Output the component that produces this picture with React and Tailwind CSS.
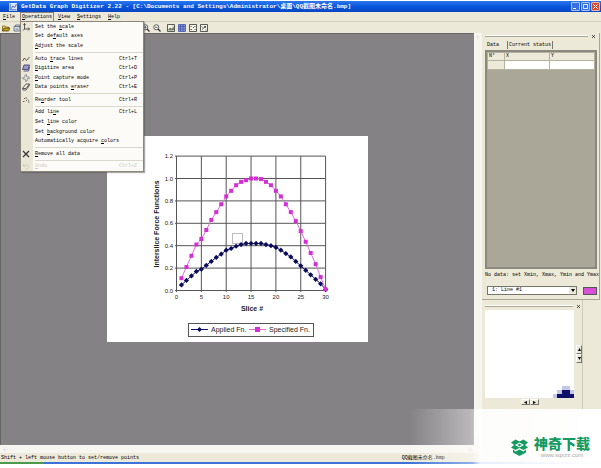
import React from 'react';
import { ArrowDown, ArrowLeft, ArrowRight, ArrowUp } from 'lucide-react';

const MENU = [
  [
    { pre: 'Set the ', key: 's', post: 'cale', icon: 'axes' },
    { pre: 'Set de', key: 'f', post: 'ault axes' },
    { pre: '', key: 'A', post: 'djust the scale' },
  ],
  [
    { pre: 'Auto ', key: 't', post: 'race lines', shortcut: 'Ctrl+T', icon: 'trace' },
    { pre: '', key: 'D', post: 'igitize area', shortcut: 'Ctrl+D', icon: 'area' },
    { pre: '', key: 'P', post: 'oint capture mode', shortcut: 'Ctrl+P', icon: 'capture' },
    { pre: 'Data points ', key: 'e', post: 'raser', shortcut: 'Ctrl+E', icon: 'eraser' },
  ],
  [{ pre: 'Re', key: 'o', post: 'rder tool', shortcut: 'Ctrl+R', icon: 'reorder' }],
  [
    { pre: 'Add li', key: 'n', post: 'e', shortcut: 'Ctrl+L' },
    { pre: 'Set ', key: 'l', post: 'ine color' },
    { pre: 'Set ', key: 'b', post: 'ackground color' },
    { pre: 'Automatically acquire ', key: 'c', post: 'olors' },
  ],
  [{ pre: '', key: 'R', post: 'emove all data', icon: 'remove' }],
  [{ pre: '', key: 'U', post: 'ndo', shortcut: 'Ctrl+Z', icon: 'undo', disabled: true }],
];

const SPECIFIED = [
  0.11, 0.21, 0.31, 0.41, 0.46, 0.54, 0.63, 0.7, 0.77, 0.84, 0.89, 0.94, 0.97, 0.985, 1, 1, 0.995,
  0.97, 0.94, 0.89, 0.84, 0.77, 0.7, 0.62, 0.53, 0.435, 0.335, 0.235, 0.12, 0.01,
];
const APPLIED = [
  0.05, 0.09, 0.13, 0.17, 0.19, 0.225, 0.26, 0.295, 0.325, 0.36, 0.375, 0.395, 0.41, 0.42, 0.42,
  0.42, 0.42, 0.41, 0.4, 0.385, 0.36, 0.33, 0.3, 0.26, 0.22, 0.18, 0.14, 0.1, 0.06, 0.01,
];

const px = (n) => 69.5 + n * 4.97;
const py = (v) => 154.5 - v * 112;
const points = (values) => values.map((v, i) => `${px(i + 1)},${py(v)}`).join(' ');

const Icon = ({ name }) => (
  <svg viewBox="0 0 16 16" className="h-2 w-2" fill="none" stroke="#333" strokeWidth="1.6" aria-hidden="true">
    {name === 'axes' && <path d="M5 1v11h10M3 4l2-3 2 3M12 9l3 3-3 3M2 15l3-3" />}
    {name === 'trace' && <path d="M1 12l4-6 4 5 6-7" />}
    {name === 'area' && (
      <>
        <path d="M4 2h11l-3 9H1z" fill="#9c9ccc" stroke="#333366" />
        <path d="M3 14h10l2-8" stroke="#333366" />
      </>
    )}
    {name === 'capture' && (
      <>
        <path d="M8 0v5M8 11v5M0 8h5M11 8h5" stroke="#666680" />
        <path d="M4 4h8v8H4z" strokeDasharray="2 2" stroke="#666680" />
      </>
    )}
    {name === 'eraser' && <path d="M8 2h7l-1 4-6 8H2l-1-3zM2 11h6l6-8" fill="#f6f5ee" />}
    {name === 'reorder' && <path d="M2 11h3M7 4h3M8 9h2M12 12h3M4 6l2-2M12 7l1 2" />}
    {name === 'remove' && <path d="M2 2l12 12M14 2L2 14" strokeWidth="2.4" />}
    {name === 'undo' && <path d="M3 3v6h6M3 9c3-6 11-5 10 2-1 3-4 3-6 3" stroke="#cfcab8" />}
    {name === 'open' && (
      <>
        <path d="M1 14V4h5l2 2h5v2" fill="#f6df75" stroke="#7b6510" />
        <path d="M1 14l3-6h12l-3 6z" fill="#c49d24" stroke="#4b3d08" />
      </>
    )}
    {name === 'save' && <path d="M2 5h12v9H2zM5 5V2h9v7M5 10h6" fill="#dbe4f4" stroke="#555d6b" />}
    {(name === 'zoomIn' || name === 'zoomOut') && (
      <>
        <circle cx="6.5" cy="6.5" r="5" fill="#fff" />
        <path d="M10 10l5 5" strokeWidth="2.6" />
        <path d="M4 6.5h5" />
        {name === 'zoomIn' && <path d="M6.5 4v5" />}
      </>
    )}
    {name === 'picture' && (
      <>
        <path d="M1 1h14v14H1z" fill="#f4f2e7" />
        <path d="M3 12l3-4 3 2 4-3v5zM11 4h2" fill="#7c8a6c" stroke="#66705a" />
      </>
    )}
    {name === 'grid' && (
      <>
        <path d="M1 1h14v14H1z" fill="#8997d6" stroke="#4555aa" />
        <path d="M5 1v14M10 1v14M1 5h14M1 10h14" stroke="#4555aa" />
      </>
    )}
    {name === 'plot' && <path d="M1 1h14v14H1zM4 4v2M3 11h3M8 7h2M11 11h2M11 5h2" fill="#f4f2e7" />}
    {name === 'export' && <path d="M1 1h14v14H1zM4 11l7-6M8 5h3v3M3 5l2 2M11 12h2" fill="#f4f2e7" />}
  </svg>
);

const ToolButton = ({ name, label }) => (
  <button type="button" aria-label={label} className="flex h-[10px] w-[11px] items-center justify-center">
    <Icon name={name} />
  </button>
);

const TitleBar = () => (
  <header className="flex h-[11px] shrink-0 items-center gap-1 bg-gradient-to-b from-[#2a78ee] via-[#0a55dd] to-[#0847c4] pr-px pl-[9px] text-white">
    <svg viewBox="0 0 14 14" className="h-2 w-2" aria-hidden="true">
      <rect width="14" height="14" fill="#dbe8ff" />
      <path d="M2 1v11h11M4 10l3-5 3 3 3-6" fill="none" stroke="#3656a8" strokeWidth="1.5" />
    </svg>
    <h1 className="flex-1 truncate text-[6px] leading-[10px] font-bold">
      GetData Graph Digitizer 2.22 - [C:\Documents and Settings\Administrator\桌面\QQ截图未命名.bmp]
    </h1>
    <div className="flex gap-px">
      <button type="button" aria-label="Minimize" className="flex h-[9px] w-[9px] items-end rounded-[1px] border border-[#a9c4f7] bg-[#3a6fe0] p-px">
        <span className="h-px w-[3px] bg-white" />
      </button>
      <button type="button" aria-label="Restore" className="flex h-[9px] w-[9px] items-center justify-center rounded-[1px] border border-[#a9c4f7] bg-[#3a6fe0]">
        <span className="h-[5px] w-[5px] border border-[#dfe9fc]" />
      </button>
      <button type="button" aria-label="Close" className="flex h-[9px] w-[9px] items-center justify-center rounded-[1px] border border-[#f0b8a8] bg-[#d8492b]">
        <svg viewBox="0 0 6 6" className="h-[5px] w-[5px]" stroke="#fff" strokeWidth="1.2"><path d="M0 0l6 6M6 0L0 6" /></svg>
      </button>
    </div>
  </header>
);

const OperationsMenu = () => (
  <div role="menu" className="absolute top-[9px] left-0 z-10 flex h-[151px] w-[124px] flex-col border border-[#8a867a] bg-gradient-to-r from-[#ebe7d6] from-[12px] to-[#fcfbf7] to-[12px] shadow-[1px_1px_1px_#55555580]">
    {MENU.map((group, g) => (
      <React.Fragment key={g}>
        {g > 0 && <div className="flex h-[3px] items-center pl-[14px]"><div className="h-px w-full bg-[#dad7cd]" /></div>}
        {group.map((item) => (
          <button
            key={item.pre + item.key + item.post}
            type="button"
            role="menuitem"
            disabled={item.disabled}
            className="flex w-full flex-1 items-center pr-[6px] text-[5px] leading-[8px] text-black disabled:text-[#cbc8be]"
          >
            <span className="flex w-[14px] pl-px">{item.icon && <Icon name={item.icon} />}</span>
            <span className="flex-1 text-left whitespace-pre">{item.pre}<u>{item.key}</u>{item.post}</span>
            <span>{item.shortcut}</span>
          </button>
        ))}
      </React.Fragment>
    ))}
  </div>
);

const MenuBar = () => (
  <nav className="flex h-[10px] shrink-0 items-center border-b border-[#d5d1c0] text-[5px] leading-[8px]">
    <button type="button" className="w-[20px] pl-[3px] text-left"><u>F</u>ile</button>
    <div className="relative">
      <button type="button" aria-expanded="true" className="h-[9px] w-[34px] border border-b-0 border-[#8a867a]"><u>O</u>perations</button>
      <OperationsMenu />
    </div>
    <button type="button" className="pl-1"><u>V</u>iew</button>
    <button type="button" className="pl-[7px]"><u>S</u>ettings</button>
    <button type="button" className="pl-[7px]"><u>H</u>elp</button>
  </nav>
);

const Chart = () => (
  <svg viewBox="0 0 261 206" role="img" aria-label="Interslice Force Functions" className="w-[261px] bg-white" fontFamily="Liberation Sans, sans-serif">
    <g stroke="#555" strokeWidth="1">
      {[0, 5, 10, 15, 20, 25, 30].map((n) => <path key={n} d={`M${px(n)} ${py(1.2)}V156`} />)}
      {[0, 0.2, 0.4, 0.6, 0.8, 1, 1.2].map((v) => <path key={v} d={`M68 ${py(v)}H${px(30)}`} />)}
    </g>
    <g fontSize="6" fill="#222">
      {[0, 5, 10, 15, 20, 25, 30].map((n) => <text key={n} x={px(n)} y="163" textAnchor="middle">{n}</text>)}
      {[0, 0.2, 0.4, 0.6, 0.8, 1, 1.2].map((v) => <text key={v} x="66" y={py(v) + 2} textAnchor="end">{v.toFixed(1)}</text>)}
    </g>
    <rect x="125.5" y="97.5" width="10" height="10" fill="#fff" stroke="#bbb" />
    <polyline points={points(APPLIED)} fill="none" stroke="#13136b" />
    {APPLIED.map((v, i) => <path key={i} d={`M${px(i + 1)} ${py(v) - 2.6}l2.600 2.600l-2.600 2.600l-2.600-2.600z`} fill="#0b0b5c" />)}
    <polyline points={points(SPECIFIED)} fill="none" stroke="#e06ae0" />
    {SPECIFIED.map((v, i) => <rect key={i} x={px(i + 1) - 2} y={py(v) - 2} width="4" height="4" fill="#d42fd4" />)}
    <g fontSize="7" fontWeight="bold" fill="#222">
      <text transform="translate(52 88) rotate(-90)" textAnchor="middle">Interslice Force Functions</text>
      <text x="145" y="175" textAnchor="middle">Slice #</text>
    </g>
    <rect x="81.5" y="187.5" width="125" height="13" fill="#fff" stroke="#555" />
    <g fontSize="7" fill="#222">
      <path d="M84 193.500h17" stroke="#13136b" />
      <path d="M92.500 191l2.500 2.500l-2.500 2.500l-2.500-2.500z" fill="#0b0b5c" />
      <text x="104" y="196">Applied Fn.</text>
      <path d="M142 193.500h17" stroke="#e06ae0" />
      <rect x="148" y="191" width="5" height="5" fill="#d42fd4" />
      <text x="162" y="196">Specified Fn.</text>
    </g>
  </svg>
);

const PanelGrip = () => (
  <div className="flex h-[6px] items-center gap-1">
    <div className="h-[2px] flex-1 border-y border-t-white border-b-[#aaa694]" />
    <button type="button" aria-label="Close panel" className="flex h-[5px] w-[5px] items-center">
      <svg viewBox="0 0 4 4" className="h-[3px] w-[3px]" stroke="#222"><path d="M0 0l4 4M4 0L0 4" /></svg>
    </button>
  </div>
);

const DataPanel = () => (
  <section className="flex h-[267px] shrink-0 flex-col border-r border-b border-[#aaa694] pr-[2px] pl-[3px]">
    <PanelGrip />
    <div className="mt-px flex h-[10px] items-center text-[5px] leading-[8px]">
      <button type="button" className="w-[22px] pl-[2px] text-left">Data</button>
      <button type="button" className="h-[8px] border-x border-[#77746a] px-px">Current status</button>
    </div>
    <div className="flex-1 border-2 border-[#8b887d] bg-[#aaa799]">
      <table className="w-full table-fixed border-collapse bg-white text-left text-[5px] leading-[7px]">
        <thead className="bg-[#ece9d8]">
          <tr>
            <th className="w-[17px] border border-[#b5b19f] px-px font-normal">N°</th>
            <th className="border border-[#b5b19f] px-px font-normal">X</th>
            <th className="border border-[#b5b19f] px-px font-normal">Y</th>
          </tr>
        </thead>
        <tbody>
          <tr className="h-[9px]">
            <td className="border border-[#b5b19f] bg-[#ece9d8]" />
            <td className="border border-[#b5b19f]" />
            <td className="border border-[#b5b19f]" />
          </tr>
        </tbody>
      </table>
    </div>
    <p className="mt-[2px] text-[5px] leading-[8px] whitespace-nowrap">No data: set Xmin, Xmax, Ymin and Ymax</p>
    <div className="mt-[7px] mb-1 flex items-center gap-[6px] pl-[2px]">
      <div className="relative flex-1">
        <select aria-label="Line" className="block h-[9px] w-full appearance-none border border-[#77746a] bg-white pl-1 text-[5px] leading-[7px]">
          <option>1: Line #1</option>
        </select>
        <span className="pointer-events-none absolute top-px right-px flex h-[7px] w-[7px] items-center justify-center bg-[#ece9d8]">
          <svg viewBox="0 0 4 3" className="w-[4px]"><path d="M0 0h4L2 3z" /></svg>
        </span>
      </div>
      <button type="button" aria-label="Line color" className="h-[8px] w-[14px] border border-[#555] bg-[#d84fd8]" />
    </div>
  </section>
);

const NudgeButton = ({ label, d }) => (
  <button type="button" aria-label={label} className="flex h-[9px] w-[6px] items-center justify-center border border-t-white border-r-[#77746a] border-b-[#77746a] border-l-white bg-[#ece9d8]">
    <svg viewBox="0 0 4 4" className="h-[3px] w-[3px]"><path d={d} /></svg>
  </button>
);

const SideNudgeButton = ({ label, d }) => (
  <button type="button" aria-label={label} className="flex h-[6px] w-[9px] items-center justify-center border border-t-white border-r-[#77746a] border-b-[#77746a] border-l-white bg-[#ece9d8]">
    <svg viewBox="0 0 4 4" className="h-[3px] w-[3px]"><path d={d} /></svg>
  </button>
);

const PreviewPanel = () => (
  <section className="flex w-[101px] flex-1 flex-col border-r border-[#cfcbb9] pt-[3px] pl-[3px]">
    <PanelGrip />
    <div className="mt-px flex items-center gap-[2px]">
      <svg viewBox="0 0 89 88" className="w-[89px] bg-white" role="img" aria-label="Magnified view" shapeRendering="crispEdges">
        <path d="M77 76h8v4h4v8H68v-4h4v-4h5z" fill="#c3c8e6" />
        <path d="M77 80h8v4h4v4H72v-4h5z" fill="#10106a" />
      </svg>
      <div className="flex flex-col">
        <NudgeButton label="Up" d="M2 0l2 4H0z" />
        <NudgeButton label="Down" d="M0 0h4L2 4z" />
      </div>
    </div>
    <div className="mt-px flex w-[90px] justify-center">
      <SideNudgeButton label="Left" d="M4 0v4L0 2z" />
      <SideNudgeButton label="Right" d="M0 0l4 2-4 2z" />
    </div>
  </section>
);

const Watermark = () => (
  <a href="#home" className="absolute right-0 bottom-0 flex h-[59px] w-[192px] items-center justify-end gap-[6px] bg-[linear-gradient(90deg,#ffffff00_0%,#ffffff70_33%,#ffffffe0_37%,#ffffff_100%)] pt-[18px] pr-[11px]">
    <svg viewBox="0 0 34 34" className="h-[17px] w-[17px]" fill="#159a63" aria-hidden="true">
      <path d="M9 1l8 4 8-4 9 6-6 5 6 5-9 5-8-4-8 4-9-5 6-5-6-5zM17 7l-9 5 9 5 9-5zM17 9l2 2h3l-5 4-5-4h3z" fillRule="evenodd" />
      <path d="M4 21l5 4 8-4 8 4 5-4v6l-13 7-13-7z" />
    </svg>
    <span className="flex flex-col items-center">
      <span className="font-['Noto_Sans_CJK_SC',sans-serif] text-[14px] leading-[15px] font-black text-[#159a63]">神奇下载</span>
      <span className="pt-px font-['Liberation_Sans',sans-serif] text-[6px] leading-[7px] text-[#aaa]">www.sqxzz.com</span>
    </span>
  </a>
);

export default function App() {
  return (
    <div className="relative flex min-h-screen flex-col bg-white pt-px pb-1 font-['Liberation_Mono','Noto_Sans_CJK_SC',monospace] text-black">
      <div className="flex flex-1 flex-col bg-[#ece9d8]">
        <TitleBar />
        <MenuBar />
        <div className="flex h-[11px] shrink-0 items-center">
          <ToolButton name="open" label="Open" />
          <ToolButton name="save" label="Save" />
          <div className="w-[118px]" />
          <ToolButton name="zoomIn" label="Zoom in" />
          <ToolButton name="zoomOut" label="Zoom out" />
          <div className="w-[3px]" />
          <ToolButton name="picture" label="Image" />
          <ToolButton name="grid" label="Grid" />
          <ToolButton name="plot" label="Plot" />
          <ToolButton name="export" label="Export" />
        </div>
        <div className="flex flex-1">
          <main className="flex flex-1 flex-col">
            <div className="flex flex-1">
              <div className="flex-1 border-t border-l border-[#666] bg-[#858285] pt-[102px] pl-[106px]">
                <Chart />
              </div>
              <div className="flex w-[8px] flex-col justify-between bg-[#f6f5ef] py-px text-[#dcd9cd]">
                <ArrowUp size={7} />
                <ArrowDown size={7} />
              </div>
            </div>
            <div className="flex h-[8px] items-center justify-between bg-[#f6f5ef] pr-[9px] pl-[2px] text-[#dcd9cd]">
              <ArrowLeft size={7} />
              <ArrowRight size={7} />
            </div>
          </main>
          <aside className="flex w-[119px] flex-col pr-px">
            <DataPanel />
            <PreviewPanel />
          </aside>
        </div>
        <footer className="flex h-[9px] shrink-0 items-center text-[5px] leading-[8px]">
          <span className="w-2/3 pl-px">Shift + left mouse button to set/remove points</span>
          <span className="pl-px">QQ截图未命名.bmp</span>
        </footer>
        <div className="flex h-[2px]">
          <div className="w-[44px] bg-[#4c9a4c]" />
          <div className="flex-1 bg-[#3d73d8]" />
        </div>
      </div>
      <Watermark />
    </div>
  );
}
